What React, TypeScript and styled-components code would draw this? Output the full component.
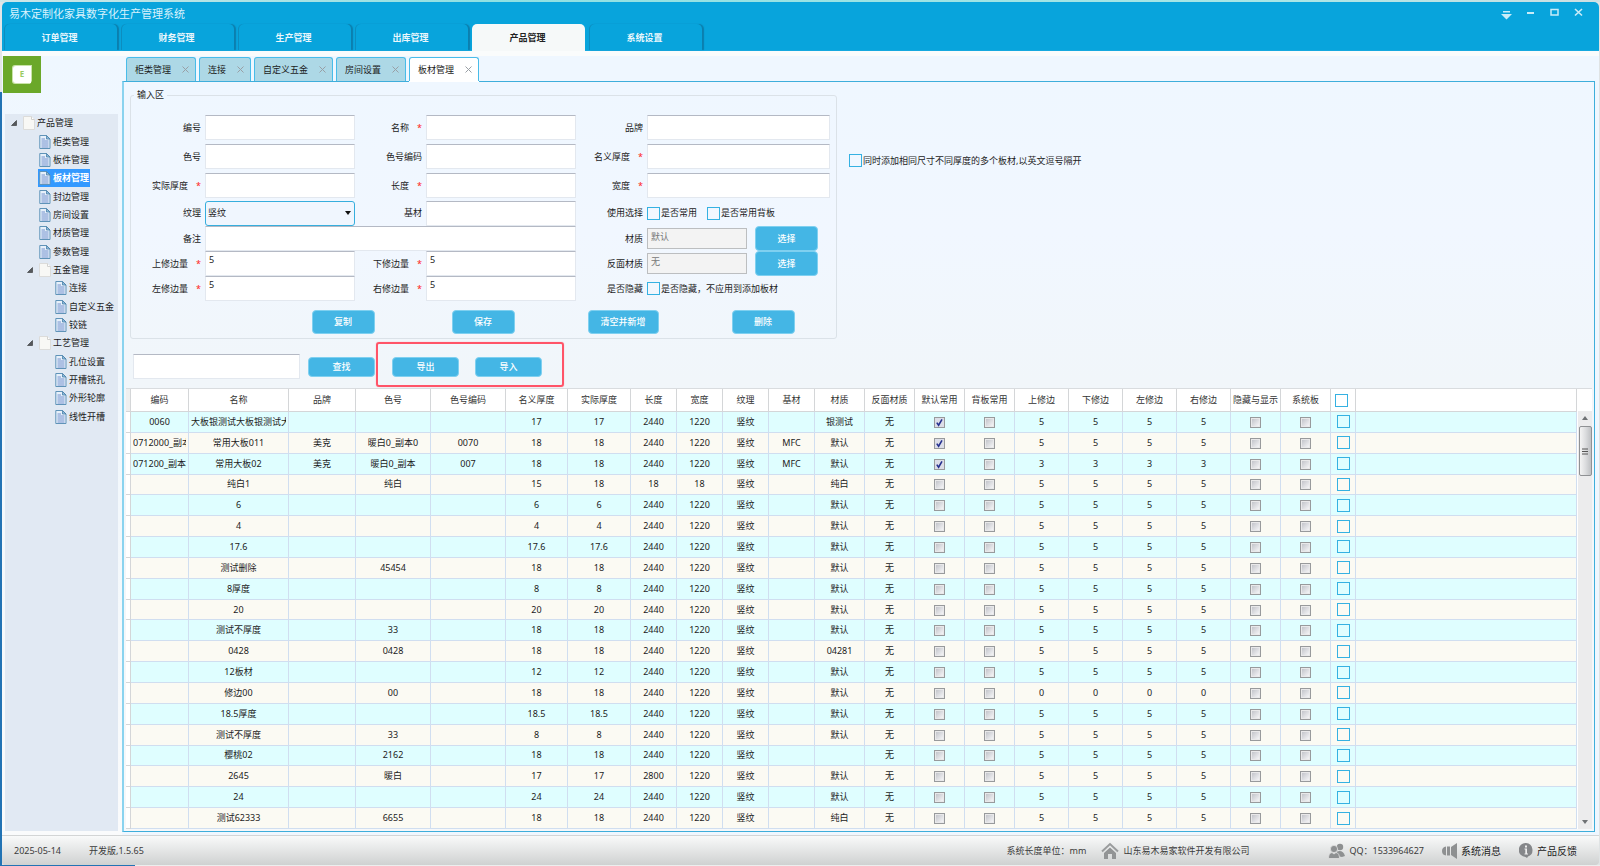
import React from "react";
import styled, { createGlobalStyle, css } from "styled-components";

const FONT = '"Noto Sans", "Noto Sans CJK SC", sans-serif';

const GlobalStyle = createGlobalStyle`
  *, *::before, *::after { box-sizing: border-box; }
  html, body, #root { height: 100%; }
  body { margin: 0; background: #f4f6f7; color: #1c1c1c; font: 9px/12px ${FONT}; }
  button, input, select { font: inherit; color: inherit; margin: 0; }
`;

/* ---------- window frame ---------- */

const Desktop = styled.div`
  display: flex;
  min-height: 100vh;
  height: 100%;
  padding: 2px 1px 1px 2px;
  background:
    linear-gradient(90deg, #cfe6e8, #8fe0e2 30%, #a9e6e6 80%, #cfdfe2) top / 100% 2px no-repeat,
    linear-gradient(#e3e6e8 92px, #2273b4 92px) left / 2px 100% no-repeat,
    linear-gradient(90deg, #2273b4 135px, #eceeee 135px) bottom / 100% 1px no-repeat,
    #dfe3e4;
`;

const Window = styled.div`
  flex: 1;
  min-width: 0;
  display: flex;
  flex-direction: column;
  background: #fafbfc;
  border-radius: 5px 5px 3px 3px;
  overflow: hidden;
`;

const Header = styled.header`
  background: #08a4dc;
  border-bottom: 1px solid #16a9df;
`;

const TitleBar = styled.div`
  display: flex;
  justify-content: space-between;
  height: 22px;
  padding: 0 14px 0 7px;
`;

const Title = styled.h1`
  margin: 0;
  padding-top: 4px;
  font-size: 11px;
  line-height: 16px;
  font-weight: 400;
  color: #d8f2fc;
`;

const WindowButtons = styled.div`
  display: flex;
  gap: 11px;
  padding-top: 4px;
`;

const WindowButton = styled.button`
  width: 13px;
  height: 14px;
  padding: 0;
  border: 0;
  background: none;
  color: #c9ecf8;
  svg { display: block; }
`;

const MainTabs = styled.nav`
  display: flex;
  gap: 4px;
  padding-left: 2px;
`;

const MainTab = styled.button<{ $active?: boolean }>`
  width: 113px;
  height: 26px;
  padding: 2px 2px 0 0;
  border: 0;
  border-radius: 5px 5px 0 0;
  font-weight: 700;
  ${(p) =>
    p.$active
      ? css`
          background: #f6f9f9;
          color: #222;
          box-shadow: 0 2px 0 #f6f9f9;
        `
      : css`
          background: #08a4dc;
          color: #eaf7fc;
          box-shadow: inset 1px 0 0 #0d8dbf, 2px 0 1px #0c7fae;
        `}
`;

const Body = styled.div`
  flex: 1;
  min-height: 0;
  display: flex;
  border-top: 5px solid #fafcfc;
`;

/* ---------- sidebar ---------- */

const Sidebar = styled.aside`
  width: 120px;
  display: flex;
  flex-direction: column;
  padding: 0 4px 4px 3px;
  background: linear-gradient(#eff7ff, #f3f8fc 60%, #fafbfc);
`;

const Logo = styled.div`
  width: 38px;
  height: 37px;
  margin: 0 0 21px -2px;
  background: #6ba829;
`;

const Tree = styled.ul`
  flex: 1;
  margin: 0;
  padding: 0;
  list-style: none;
  background: #e1e9f3;
`;

const TreeItem = styled.li<{ $level: number }>`
  display: flex;
  align-items: center;
  padding-left: ${(p) => p.$level * 16 + 1}px;
  & > svg:first-child { flex: none; margin-left: 5px; }
`;

const TreeRows = styled.div`
  display: grid;
  grid-auto-rows: 1fr;
  height: 312px;
`;

const TreeLink = styled.a<{ $selected?: boolean; $leaf?: boolean }>`
  display: flex;
  align-items: center;
  align-self: stretch;
  gap: 2px;
  margin-left: ${(p) => (p.$leaf ? 16 : 5)}px;
  padding: 0 1px;
  white-space: nowrap;
  text-decoration: none;
  color: ${(p) => (p.$selected ? "#fff" : "#1c1c1c")};
  background: ${(p) => (p.$selected ? "#3399ff" : "none")};
  font-weight: ${(p) => (p.$selected ? 700 : 400)};
  svg { flex: none; }
`;

/* ---------- workspace ---------- */

const Workspace = styled.main`
  flex: 1;
  min-width: 0;
  display: flex;
  flex-direction: column;
  padding: 1px 4px 3px 0;
  background: #eff7ff;
`;

const DocTabs = styled.nav`
  display: flex;
  gap: 3px;
  padding-left: 4px;
`;

const DocTab = styled.div<{ $active?: boolean }>`
  display: flex;
  align-items: center;
  gap: 11px;
  height: 24px;
  padding: 0 6px 0 8px;
  border: 1px solid #49bce9;
  border-bottom: 0;
  border-radius: 3px 3px 0 0;
  background: ${(p) => (p.$active ? "#fff" : "#add8e6")};
  ${(p) =>
    p.$active &&
    css`
      position: relative;
      z-index: 1;
      box-shadow: 0 1px 0 #fff;
    `}
`;

const DocTabLink = styled.a`
  color: inherit;
  text-decoration: none;
`;

const CloseButton = styled.button`
  width: 7px;
  height: 7px;
  padding: 0;
  border: 0;
  background: none;
  color: #999fa5;
  svg { display: block; }
`;

const Panel = styled.section`
  flex: 1;
  min-height: 0;
  display: flex;
  flex-direction: column;
  padding: 7px 2px 2px 2px;
  border: 1px solid #3eaedb;
  border-left: 2px solid #8ad3ef;
  background: linear-gradient(#eff7ff, #f1f7ff 20%, #f1f6fa 40%, #f6f8fa);
`;

const FormArea = styled.div`
  display: flex;
  align-items: flex-start;
  padding-left: 4px;
`;

const InputGroup = styled.fieldset`
  width: 707px;
  margin: 0;
  padding: 12px 0 4px;
  border: 1px solid #dbe2e8;
  border-radius: 3px;
`;

const Legend = styled.legend`
  margin-left: 3px;
  padding: 0 3px;
  line-height: 12px;
`;

const Fields = styled.div`
  display: grid;
  grid-template-columns: 74px 150px 71px 150px 71px 183px;
  grid-template-rows: 29px 29px 29px 26px 25px 25px 25px;
  align-items: center;
`;

const FieldLabel = styled.label`
  display: flex;
  justify-content: flex-end;
  gap: 8px;
  padding-right: 4px;
  white-space: nowrap;
`;

const Star = styled.span`
  color: #f22;
`;

const control = css`
  width: 100%;
  height: 25px;
  border: 1px solid #e3e8ef;
  border-top-color: #b4b9c4;
  border-radius: 0;
  background: #fff;
  padding: 0 3px 8px;
  outline: 0;
`;

const TextInput = styled.input<{ $wide?: boolean }>`
  ${control}
  grid-column: ${(p) => (p.$wide ? "span 3" : "auto")};
`;

const ReadonlyInput = styled.input`
  ${control}
  width: 100px;
  height: 21px;
  padding-bottom: 4px;
  border: 1px solid #bcbec0;
  background: #f3f3f3;
  color: #777;
`;

const SelectBox = styled.div`
  display: grid;
  align-items: center;
  & > * { grid-area: 1 / 1; }
  svg { justify-self: end; margin-right: 4px; pointer-events: none; }
`;

const Select = styled.select`
  width: 100%;
  height: 25px;
  padding: 0 2px;
  appearance: none;
  border: 1px solid #36aedd;
  border-radius: 3px;
  background: #f0f6fe;
  outline: 0;
`;

const Inline = styled.div<{ $gap?: number }>`
  display: flex;
  align-items: center;
  gap: ${(p) => p.$gap ?? 0}px;
  white-space: nowrap;
`;

const CheckLabel = styled.label`
  display: flex;
  align-items: center;
  gap: 1px;
  white-space: nowrap;
`;

const BlueCheck = styled.input.attrs({ type: "checkbox" })`
  appearance: none;
  display: block;
  flex: none;
  width: 13px;
  height: 13px;
  border: 1px solid #35b1e2;
  background: transparent;
`;

const GrayCheck = styled.input.attrs({ type: "checkbox" })`
  appearance: none;
  display: block;
  width: 11px;
  height: 11px;
  margin: 1px auto 0;
  border: 1px solid #989a9c;
  background: linear-gradient(135deg, #c3c5cb, #f4f4f6) content-box, #e9e9ea;
  padding: 1px;
  &:checked {
    background: url("data:image/svg+xml,%3Csvg xmlns='http://www.w3.org/2000/svg' viewBox='0 0 9 9'%3E%3Cpath d='M1.8 4.6 3.6 7.2 7 1.4' fill='none' stroke='%2326318f' stroke-width='1.6'/%3E%3C/svg%3E") center / 9px 9px no-repeat, #dcdee8;
  }
`;

const ActionButton = styled.button<{ $w?: number; $h?: number }>`
  width: ${(p) => p.$w ?? 63}px;
  height: ${(p) => p.$h ?? 24}px;
  padding: 0;
  border: 1px solid #7fd0f0;
  border-radius: 4px;
  background: #44b6e5;
  color: #fff;
  font-weight: 500;
`;

const FormActions = styled.div`
  display: grid;
  grid-template-columns: repeat(4, 140px);
  justify-items: center;
  padding: 9px 0 0 142px;
`;

const SideOption = styled.div`
  padding: 65px 0 0 12px;
`;

const SearchRow = styled.div`
  display: flex;
  align-items: center;
  gap: 8px;
  padding: 15px 0 9px 7px;
`;

const SearchInput = styled.input`
  ${control}
  width: 167px;
`;

const TransferActions = styled.div`
  position: relative;
  display: flex;
  gap: 16px;
  margin-left: 9px;
  &::after {
    content: "";
    position: absolute;
    inset: -15px -22px -10px -16px;
    border: 2px solid #ff5468;
    border-radius: 3px;
    box-shadow: 0 0 1px #ff8c99;
    pointer-events: none;
  }
`;

/* ---------- data grid ---------- */

const GridArea = styled.div`
  flex: 1;
  min-height: 0;
  display: flex;
  background: #fff;
  border-top: 1px solid #d9dcdf;
`;

const GridScroll = styled.div`
  flex: 1;
  min-width: 0;
  overflow: hidden;
`;

const Table = styled.table`
  width: 100%;
  height: 100%;
  table-layout: fixed;
  border-collapse: separate;
  border-spacing: 0;
`;

const HeadCell = styled.th`
  height: 23px;
  padding: 0;
  font-weight: 400;
  color: #333;
  white-space: nowrap;
  overflow: hidden;
  border-right: 1px solid #d4d6d8;
  border-bottom: 1px solid #d4d6d8;
  &:first-child { background: #efefef; }
`;

const BodyCell = styled.td`
  padding: 0 2px;
  text-align: center;
  white-space: nowrap;
  overflow: hidden;
  border-right: 1px solid #d0def0;
  border-bottom: 1px solid #d0def0;
`;

const ClipText = styled.div`
  overflow: hidden;
`;

const BodyRow = styled.tr`
  background: #fbfaf3;
  &:nth-child(odd) { background: #dffeff; }
  ${BodyCell}:first-child { background: #fff; border-color: #d4d6d8; }
`;

const PickBox = styled.div`
  padding-left: 4px;
`;

const ScrollBar = styled.div`
  width: 14px;
  display: flex;
  flex-direction: column;
  align-items: center;
  margin: 22px 0 0 1px;
  padding: 5px 0;
  background: #ececed;
  svg { flex: none; }
`;

const Thumb = styled.div`
  width: 13px;
  height: 50px;
  display: grid;
  place-items: center;
  margin: 6px 0 auto;
  border: 1px solid #8f9194;
  border-radius: 2px;
  background: linear-gradient(90deg, #f4f4f4, #dcdddf 50%, #bfc1c4);
`;

/* ---------- status bar ---------- */

const StatusBar = styled.footer`
  display: flex;
  align-items: center;
  height: 30px;
  padding: 0 22px 0 12px;
  border-top: 1px solid #d3d5d6;
  background: linear-gradient(#f9fafa, #cfd1d1);
  color: #3b3b3b;
`;

const StatusItem = styled.span<{ $before?: number; $end?: boolean; $large?: boolean }>`
  display: flex;
  align-items: center;
  gap: 4px;
  white-space: nowrap;
  font-size: ${(p) => (p.$large ? 10 : 9)}px;
  margin-left: ${(p) => (p.$end ? "auto" : `${p.$before ?? 0}px`)};
  color: ${(p) => (p.$large ? "#1c1c1c" : "inherit")};
`;

/* ---------- icons ---------- */

const Close = () => (
  <svg width="7" height="7" viewBox="0 0 7 7" aria-hidden="true">
    <path d="M.5.5l6 6M6.500.5l-6 6" stroke="currentColor" strokeWidth="1" fill="none" />
  </svg>
);

const Expander = () => (
  <svg width="6" height="6" viewBox="0 0 6 6" aria-hidden="true">
    <path d="M5.500 .5V5.500H.5z" fill="#55585c" stroke="#333" strokeWidth=".6" />
  </svg>
);

const FolderPage = () => (
  <svg width="12" height="14" viewBox="0 0 12 14" aria-hidden="true">
    <path d="M.5.5h8l3 3v10H.5z" fill="#f8f8f5" stroke="#dcdcda" />
    <path d="M8.500.5v3h3" fill="#fff" stroke="#d2d2d0" />
  </svg>
);

const DocPage = () => (
  <svg width="12" height="14" viewBox="0 0 12 14" aria-hidden="true">
    <path d="M.8.5H7.500L11 4v9.500H.8z" fill="#e6f0fa" stroke="#5f93b8" />
    <path d="M7.500.5V4H11z" fill="#8fbcdc" stroke="#4a80a8" strokeWidth=".8" />
    <path d="M2.500 4h3.500M2.500 6h7M2.500 8h7M2.500 10h7M2.500 12h7" stroke="#6686c8" strokeWidth=".9" />
  </svg>
);

/* ---------- data ---------- */

const mainTabs = ["订单管理", "财务管理", "生产管理", "出库管理", "产品管理", "系统设置"];
const docTabs = ["柜类管理", "连接", "自定义五金", "房间设置", "板材管理"];

type Node = { name: string; level: number; leaf?: boolean };
const leaf = (name: string, level: number): Node => ({ name, level, leaf: true });
const tree: Node[] = [
  { name: "产品管理", level: 0 },
  ...["柜类管理", "板件管理", "板材管理", "封边管理", "房间设置", "材质管理", "参数管理"].map((n) => leaf(n, 1)),
  { name: "五金管理", level: 1 },
  ...["连接", "自定义五金", "铰链"].map((n) => leaf(n, 2)),
  { name: "工艺管理", level: 1 },
  ...["孔位设置", "开槽铣孔", "外形轮廓", "线性开槽"].map((n) => leaf(n, 2)),
];

const columns: [string, number][] = [
  ["编码", 58], ["名称", 100], ["品牌", 67], ["色号", 75], ["色号编码", 75], ["名义厚度", 62],
  ["实际厚度", 63], ["长度", 46], ["宽度", 46], ["纹理", 46], ["基材", 46], ["材质", 50],
  ["反面材质", 50], ["默认常用", 50], ["背板常用", 50], ["上修边", 54], ["下修边", 54],
  ["左修边", 54], ["右修边", 54], ["隐藏与显示", 50], ["系统板", 50],
];

type Board = {
  code?: string; name: string; brand?: string; color?: string; colorCode?: string;
  nominal: string; actual?: string; length?: string; width?: string; base?: string;
  material?: string; common?: boolean; trim?: string;
};
const boards: Board[] = [
  { code: "0060", name: "大板银测试大板银测试大", nominal: "17", material: "银测试", common: true },
  { code: "0712000_副本", name: "常用大板011", brand: "美克", color: "暖白0_副本0", colorCode: "0070", nominal: "18", base: "MFC", common: true },
  { code: "071200_副本", name: "常用大板02", brand: "美克", color: "暖白0_副本", colorCode: "007", nominal: "18", base: "MFC", common: true, trim: "3" },
  { name: "纯白1", color: "纯白", nominal: "15", actual: "18", length: "18", width: "18", material: "纯白" },
  { name: "6", nominal: "6" },
  { name: "4", nominal: "4" },
  { name: "17.6", nominal: "17.6" },
  { name: "测试删除", color: "45454", nominal: "18" },
  { name: "8厚度", nominal: "8" },
  { name: "20", nominal: "20" },
  { name: "测试不厚度", color: "33", nominal: "18" },
  { name: "0428", color: "0428", nominal: "18", material: "04281" },
  { name: "12板材", nominal: "12" },
  { name: "修边00", color: "00", nominal: "18", trim: "0" },
  { name: "18.5厚度", nominal: "18.5" },
  { name: "测试不厚度", color: "33", nominal: "8" },
  { name: "樱桃02", color: "2162", nominal: "18", material: "" },
  { name: "2645", color: "暖白", nominal: "17", length: "2800" },
  { name: "24", nominal: "24" },
  { name: "测试62333", color: "6655", nominal: "18", material: "纯白" },
];

/* ---------- parts ---------- */

const Label = ({ id, text, required }: { id?: string; text: string; required?: boolean }) => (
  <FieldLabel htmlFor={id}>
    {text}
    {required && <Star>*</Star>}
  </FieldLabel>
);

const Field = ({ id, text, required, value, wide }: { id: string; text: string; required?: boolean; value?: string; wide?: boolean }) => (
  <>
    <Label id={id} text={text} required={required} />
    <TextInput id={id} type="text" defaultValue={value} $wide={wide} />
  </>
);

const Row = ({ b }: { b: Board }) => {
  const trim = b.trim ?? "5";
  const cells: React.ReactNode[] = [
    <ClipText>{b.code}</ClipText>, <ClipText>{b.name}</ClipText>,
    b.brand, b.color, b.colorCode, b.nominal, b.actual ?? b.nominal,
    b.length ?? "2440", b.width ?? "1220", "竖纹", b.base, b.material ?? "默认", "无",
    <GrayCheck aria-label="默认常用" defaultChecked={b.common} />,
    <GrayCheck aria-label="背板常用" />,
    trim, trim, trim, trim,
    <GrayCheck aria-label="隐藏与显示" />,
    <GrayCheck aria-label="系统板" />,
    <PickBox><BlueCheck aria-label="选择该行" /></PickBox>,
  ];
  return (
    <BodyRow>
      <BodyCell />
      {cells.map((c, i) => <BodyCell key={i}>{c}</BodyCell>)}
      <BodyCell />
    </BodyRow>
  );
};

export default function App() {
  return (
    <Desktop>
      <GlobalStyle />
      <Window>
        <Header>
          <TitleBar>
            <Title>易木定制化家具数字化生产管理系统</Title>
            <WindowButtons>
              <WindowButton aria-label="菜单">
                <svg width="13" height="14" viewBox="0 0 13 14"><path d="M3 5h7v1.500H3zM1 8h11L6.500 13.500z" fill="currentColor" /></svg>
              </WindowButton>
              <WindowButton aria-label="最小化">
                <svg width="13" height="14" viewBox="0 0 13 14"><path d="M3 6h7v2H3z" fill="currentColor" /></svg>
              </WindowButton>
              <WindowButton aria-label="最大化">
                <svg width="13" height="14" viewBox="0 0 13 14"><path d="M3 3.500h7v5.500H3z" fill="none" stroke="currentColor" strokeWidth="1.500" /></svg>
              </WindowButton>
              <WindowButton aria-label="关闭">
                <svg width="13" height="14" viewBox="0 0 13 14"><path d="M3 3l7 6.500M10 3L3 9.500" fill="none" stroke="currentColor" strokeWidth="1.600" /></svg>
              </WindowButton>
            </WindowButtons>
          </TitleBar>
          <MainTabs>
            {mainTabs.map((t) => <MainTab key={t} $active={t === "产品管理"}>{t}</MainTab>)}
          </MainTabs>
        </Header>

        <Body>
          <Sidebar>
            <Logo>
              <svg width="38" height="37" viewBox="0 0 38 37" role="img" aria-label="E">
                <path d="M12 9h17v16l-2 3H12q-3 0-3-3V12q0-3 3-3z" fill="#c9e3a8" />
                <path d="M13 10h15v17H13q-3 0-3-3V13q0-3 3-3z" fill="#fff" />
                <text x="19" y="21" textAnchor="middle" fontSize="8" fontWeight="700" fill="#9acb62">E</text>
              </svg>
            </Logo>
            <Tree>
              <TreeRows>
                {tree.map((n) => (
                  <TreeItem key={n.level + n.name} $level={n.level}>
                    {!n.leaf && <Expander />}
                    <TreeLink href="#" $leaf={n.leaf} $selected={n.name === "板材管理"}>
                      {n.leaf ? <DocPage /> : <FolderPage />}
                      {n.name}
                    </TreeLink>
                  </TreeItem>
                ))}
              </TreeRows>
            </Tree>
          </Sidebar>

          <Workspace>
            <DocTabs>
              {docTabs.map((t) => (
                <DocTab key={t} $active={t === "板材管理"}>
                  <DocTabLink href="#">{t}</DocTabLink>
                  <CloseButton aria-label={`关闭${t}`}><Close /></CloseButton>
                </DocTab>
              ))}
            </DocTabs>
            <Panel>
              <FormArea>
                <InputGroup>
                  <Legend>输入区</Legend>
                  <Fields>
                    <Field id="no" text="编号" />
                    <Field id="name" text="名称" required />
                    <Field id="brand" text="品牌" />
                    <Field id="color" text="色号" />
                    <Field id="colorCode" text="色号编码" />
                    <Field id="nominal" text="名义厚度" required />
                    <Field id="actual" text="实际厚度" required />
                    <Field id="length" text="长度" required />
                    <Field id="width" text="宽度" required />

                    <Label id="grain" text="纹理" />
                    <SelectBox>
                      <Select id="grain"><option>竖纹</option></Select>
                      <svg width="6" height="4" viewBox="0 0 6 4" aria-hidden="true"><path d="M0 0h6L3 4z" fill="#111" /></svg>
                    </SelectBox>
                    <Field id="base" text="基材" />
                    <Label id="common" text="使用选择" />
                    <Inline $gap={10}>
                      <CheckLabel><BlueCheck id="common" />是否常用</CheckLabel>
                      <CheckLabel><BlueCheck />是否常用背板</CheckLabel>
                    </Inline>

                    <Field id="note" text="备注" wide />
                    <Label id="material" text="材质" />
                    <Inline $gap={8}>
                      <ReadonlyInput id="material" readOnly value="默认" />
                      <ActionButton $h={25}>选择</ActionButton>
                    </Inline>

                    <Field id="top" text="上修边量" required value="5" />
                    <Field id="bottom" text="下修边量" required value="5" />
                    <Label id="back" text="反面材质" />
                    <Inline $gap={8}>
                      <ReadonlyInput id="back" readOnly value="无" />
                      <ActionButton $h={25}>选择</ActionButton>
                    </Inline>

                    <Field id="left" text="左修边量" required value="5" />
                    <Field id="right" text="右修边量" required value="5" />
                    <Label id="hidden" text="是否隐藏" />
                    <CheckLabel><BlueCheck id="hidden" />是否隐藏，不应用到添加板材</CheckLabel>
                  </Fields>
                  <FormActions>
                    <ActionButton>复制</ActionButton>
                    <ActionButton>保存</ActionButton>
                    <ActionButton $w={71}>清空并新增</ActionButton>
                    <ActionButton>删除</ActionButton>
                  </FormActions>
                </InputGroup>
                <SideOption>
                  <CheckLabel><BlueCheck />同时添加相同尺寸不同厚度的多个板材,以英文逗号隔开</CheckLabel>
                </SideOption>
              </FormArea>

              <SearchRow>
                <SearchInput type="text" aria-label="查找内容" />
                <ActionButton $w={67} $h={20}>查找</ActionButton>
                <TransferActions>
                  <ActionButton $w={67} $h={20}>导出</ActionButton>
                  <ActionButton $w={67} $h={20}>导入</ActionButton>
                </TransferActions>
              </SearchRow>

              <GridArea>
                <GridScroll>
                  <Table>
                    <colgroup>
                      <col width={5} />
                      {columns.map(([n, w]) => <col key={n} width={w} />)}
                      <col width={25} />
                      <col />
                    </colgroup>
                    <thead>
                      <tr>
                        <HeadCell />
                        {columns.map(([n]) => <HeadCell key={n}>{n}</HeadCell>)}
                        <HeadCell><PickBox><BlueCheck aria-label="全选" /></PickBox></HeadCell>
                        <HeadCell />
                      </tr>
                    </thead>
                    <tbody>
                      {boards.map((b, i) => <Row key={i} b={b} />)}
                    </tbody>
                  </Table>
                </GridScroll>
                <ScrollBar aria-hidden="true">
                  <svg width="6" height="4" viewBox="0 0 6 4"><path d="M0 4h6L3 0z" fill="#6f7275" /></svg>
                  <Thumb>
                    <svg width="6" height="7" viewBox="0 0 6 7"><path d="M0 1h6M0 3.500h6M0 6h6" stroke="#555" /></svg>
                  </Thumb>
                  <svg width="6" height="4" viewBox="0 0 6 4"><path d="M0 0h6L3 4z" fill="#6f7275" /></svg>
                </ScrollBar>
              </GridArea>
            </Panel>
          </Workspace>
        </Body>

        <StatusBar>
          <StatusItem>2025-05-14</StatusItem>
          <StatusItem $before={28}>开发版,1.5.65</StatusItem>
          <StatusItem $end>系统长度单位：mm</StatusItem>
          <StatusItem $before={15}>
            <svg width="18" height="18" viewBox="0 0 18 18" aria-hidden="true">
              <path d="M1 9.500L9 2l8 7.500" fill="none" stroke="#9a9c9d" strokeWidth="2" />
              <path d="M3 11l6-5.500L15 11v6h-4v-5H7v5H3z" fill="#929495" />
            </svg>
            山东易木易家软件开发有限公司
          </StatusItem>
          <StatusItem $before={79}>
            <svg width="17" height="16" viewBox="0 0 17 16" aria-hidden="true" fill="#8e9091">
              <circle cx="12" cy="4" r="3.200" />
              <path d="M9 8.500q6-2 8 4.500l-3 1-5-1z" />
              <g stroke="#dfe0e0" strokeWidth=".8">
                <circle cx="6" cy="6" r="3.600" />
                <path d="M.5 15.500q0-5.500 3.500-6l2 1.500 2-1.500q3.500.5 3.500 6z" />
              </g>
            </svg>
            QQ：1533964627
          </StatusItem>
          <StatusItem $before={18} $large>
            <svg width="15" height="16" viewBox="0 0 15 16" aria-hidden="true" fill="#8e9091">
              <path d="M4 3.500v9Q0 12 0 8t4-4.500zM5 3.500h3v9H5zM9 4l6-4v16l-6-4z" />
            </svg>
            系统消息
          </StatusItem>
          <StatusItem $before={18} $large>
            <svg width="14" height="15" viewBox="0 0 14 15" aria-hidden="true">
              <path d="M7 0a7 7 0 0 1 2 13.500L8 15l-1.500-1A7 7 0 0 1 7 0z" fill="#85878a" />
              <path d="M6 2.500h2v2H6zM5.500 5.500H8v5h1v1H5.500v-1h.8v-4h-.8z" fill="#eee" />
            </svg>
            产品反馈
          </StatusItem>
        </StatusBar>
      </Window>
    </Desktop>
  );
}
